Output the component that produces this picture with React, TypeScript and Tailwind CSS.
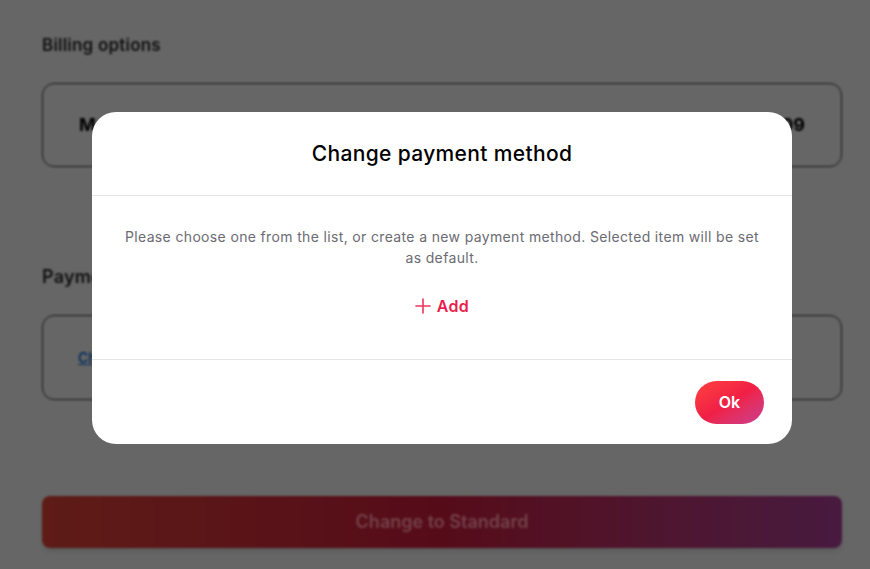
const font = { fontFamily: 'Inter, "Noto Sans", sans-serif' }

export default function App() {
  return (
    <div className="relative h-[569px] w-[870px] overflow-hidden bg-[#666666]" style={font}>
      {/* Page behind the dimmed overlay */}
      <div className="blur-[1px] pl-[42px] pr-[28px] pt-[33px]">
        <h2 className="text-[17px] font-semibold tracking-[0.2px] text-[#111111]">Billing options</h2>

        <div className="mt-[24px] flex h-[84px] items-center justify-between rounded-xl border border-[#1a1a1a] px-[36px]">
          <span className="text-[18px] font-bold text-black">Monthly</span>
          <span className="text-[18px] font-bold text-black">$19.09</span>
        </div>

        <h2 className="mt-[96px] text-[18px] font-semibold tracking-[0.2px] text-[#111111]">Payment method</h2>

        <div className="mt-[25px] flex h-[85px] items-center rounded-xl border border-[#1a1a1a] px-[35px]">
          <a className="text-[14px] font-semibold text-[#062e5a] underline">Change payment method</a>
        </div>

        <button className="mt-[96px] flex h-[52px] w-full items-center justify-center rounded-lg bg-gradient-to-r from-[#5e1c17] via-[#560b19] to-[#481a3f] text-[18px] font-semibold text-[#74424a] shadow-md">
          Change to Standard
        </button>
      </div>

      {/* Modal */}
      <div className="absolute left-[92px] top-[112px] flex w-[700px] flex-col rounded-[24px] bg-white">
        <div className="flex h-[84px] items-center justify-center border-b border-[#e5e5e5]">
          <h1 className="text-[21px] font-medium tracking-[0.35px] text-black">Change payment method</h1>
        </div>

        <div className="flex h-[163px] flex-col items-center px-[28px] pt-[30px]">
          <p className="text-center text-[14px] leading-[21px] tracking-[0.35px] text-[#6b6b73]">
            Please choose one from the list, or create a new payment method. Selected item will be set as default.
          </p>
          <button className="mt-[26px] flex items-center gap-[6px] text-[16px] font-semibold tracking-[0.3px] text-[#ea1d4e]">
            <svg width="16" height="16" viewBox="0 0 16 16" fill="none" stroke="#f0335a" strokeWidth="1.6" strokeLinecap="round">
              <path d="M8 1v14M1 8h14" />
            </svg>
            Add
          </button>
        </div>

        <div className="flex h-[85px] items-center justify-end border-t border-[#e5e5e5] px-[28px]">
          <button className="flex h-[43px] w-[69px] items-center justify-center rounded-full bg-gradient-to-br from-[#ff4040] via-[#f01f45] to-[#c93a8e] text-[16px] font-semibold text-white">
            Ok
          </button>
        </div>
      </div>
    </div>
  )
}
